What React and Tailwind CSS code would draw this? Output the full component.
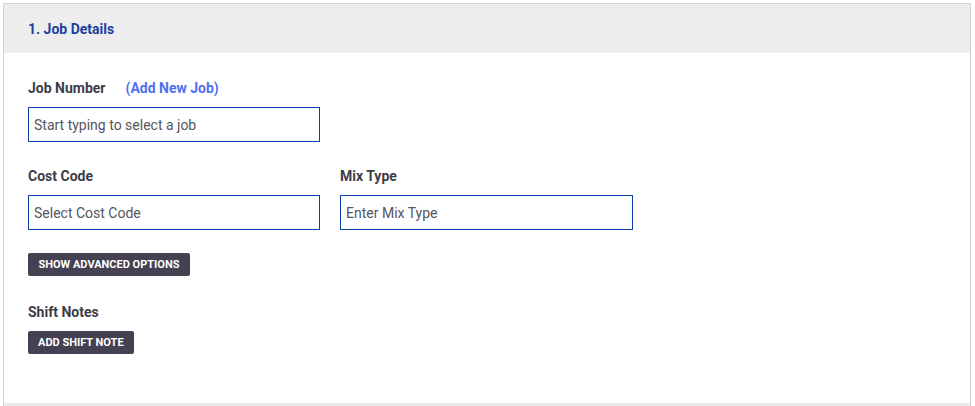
import React from 'react';

const Label = ({ children }) => (
  <div className="h-5 leading-5 text-[14px] font-bold text-[#3d3c48]">{children}</div>
);

const Field = ({ placeholder, className = '' }) => (
  <input
    placeholder={placeholder}
    className={`mt-[9px] block h-[35px] w-[292px] border border-[#0b3fae] bg-white px-[5px] text-[14px] text-[#333] placeholder:text-[#555560] outline-none ${className}`}
  />
);

const DarkButton = ({ children }) => (
  <button className="block h-[23px] w-fit rounded-[2px] bg-[#434152] px-[10px] text-[11px] font-bold uppercase leading-[23px] text-white">
    {children}
  </button>
);

export default function App() {
  return (
    <div className="min-h-[406px] bg-white pl-[3px] pt-[3px] font-['Roboto','Liberation_Sans',sans-serif]">
      <div className="w-[968px] border-x border-t border-[#d3d1df]">
        <div className="flex h-[49px] items-center bg-[#ededed] px-6 pt-[2px]">
          <h2 className="text-[14px] font-bold text-[#1c3f9f]">1. Job Details</h2>
        </div>

        <div className="px-6 pb-[49px] pt-[25px]">
          <div className="flex items-center">
            <Label>Job Number</Label>
            <a className="ml-[20px] h-5 cursor-pointer text-[14px] font-bold leading-5 text-[#4f6ff0]">
              (Add New Job)
            </a>
          </div>
          <Field placeholder="Start typing to select a job" />

          <div className="mt-6 flex gap-5">
            <div>
              <Label>Cost Code</Label>
              <Field placeholder="Select Cost Code" />
            </div>
            <div>
              <Label>Mix Type</Label>
              <Field placeholder="Enter Mix Type" className="w-[293px]" />
            </div>
          </div>

          <div className="mt-[23px]">
            <DarkButton>
              <span className="px-[0.5px]">Show Advanced Options</span>
            </DarkButton>
          </div>

          <div className="mt-[26px]">
            <Label>Shift Notes</Label>
            <div className="mt-[9px]">
              <DarkButton>Add Shift Note</DarkButton>
            </div>
          </div>
        </div>

        <div className="h-[3px] bg-[#ebebeb]" />
      </div>
    </div>
  );
}
